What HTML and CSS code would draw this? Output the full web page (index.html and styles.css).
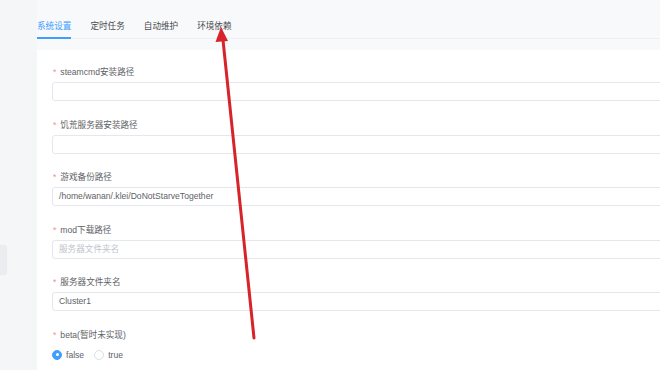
FILE: index.html
```html
<!DOCTYPE html>
<html lang="zh-CN">

<head>
    <meta charset="UTF-8">
    <meta name="viewport" content="width=device-width, initial-scale=1.0">
    <title>系统设置</title>

    <link rel="stylesheet" href="styles.css">
</head>

<body>

    <div class="layout">
        <div class="side">
            <div class="side-handle"></div>
        </div>

        <div class="main">
            <div class="tabs">
                <div class="tab active">系统设置</div>
                <div class="tab">定时任务</div>
                <div class="tab">自动维护</div>
                <div class="tab">环境依赖</div>
            </div>

            <div class="card">
                <div class="form">
                    <div class="form-item">
                        <label class="form-label">steamcmd安装路径</label>
                        <div class="input"></div>
                    </div>
                    <div class="form-item">
                        <label class="form-label">饥荒服务器安装路径</label>
                        <div class="input"></div>
                    </div>
                    <div class="form-item">
                        <label class="form-label">游戏备份路径</label>
                        <div class="input">/home/wanan/.klei/DoNotStarveTogether</div>
                    </div>
                    <div class="form-item">
                        <label class="form-label">mod下载路径</label>
                        <div class="input placeholder">服务器文件夹名</div>
                    </div>
                    <div class="form-item">
                        <label class="form-label">服务器文件夹名</label>
                        <div class="input">Cluster1</div>
                    </div>
                    <div class="form-item">
                        <label class="form-label">beta(暂时未实现)</label>
                        <div class="radio-group">
                            <span class="radio checked"></span><span class="radio-text">false</span>
                            <span class="radio"></span><span class="radio-text">true</span>
                        </div>
                    </div>
                </div>
            </div>
        </div>
    </div>

    <!-- annotation arrow drawn over the screenshot -->
    <svg class="arrow" width="660" height="370" viewBox="0 0 660 370">
        <line x1="254" y1="338" x2="223" y2="40" stroke="#d8232a" stroke-width="3" stroke-linecap="round" />
        <polygon points="221,27 215.5,42 228,41" fill="#d8232a" />
    </svg>

</body>

</html>
```

FILE: styles.css
```css
body {
    margin: 0;
    padding: 0;
    background: #f8f9fb;
    font-family: 'Liberation Sans', 'Noto Sans CJK SC', sans-serif;
    font-size: 8.6px;
    color: #606266;
    overflow: hidden;
}

.layout {
    display: flex;
    height: 370px;
}

/* left strip with the little collapse handle */
.side {
    width: 37px;
    flex-shrink: 0;
    background: #f5f6f8;
    padding-top: 245px;
    box-sizing: border-box;
}

.side-handle {
    width: 7px;
    height: 30px;
    background: #eaecef;
    border-radius: 0 2px 2px 0;
}

.main {
    flex: 1;
    min-width: 0;
    display: flex;
    flex-direction: column;
}

/* Tabs */
.tabs {
    display: flex;
    gap: 19px;
    height: 39px;
    border-bottom: 1px solid #eef0f3;
    box-sizing: border-box;
}

.tab {
    padding-top: 20px;
    line-height: 12px;
    height: 39px;
    box-sizing: border-box;
    border-bottom: 2px solid transparent;
    color: #4a4c50;
}

.tab.active {
    color: #409eff;
    border-bottom-color: #409eff;
}

/* Card */
.card {
    flex: 1;
    margin-top: 11px;
    background: #fff;
    overflow: hidden;
    padding: 16px 0 0 15px;
}

.form {
    width: 640px;
}

.form-item {
    margin-bottom: 17.5px;
}

.form-label {
    display: block;
    line-height: 12px;
    margin-bottom: 4px;
    color: #606266;
}

.form-label::before {
    content: "*";
    color: #f38b9a;
    margin: 0 4px 0 1px;
}

.input {
    height: 19px;
    line-height: 17px;
    border: 1px solid #e4e7ed;
    border-radius: 3px;
    padding-left: 6px;
    box-sizing: border-box;
    color: #606266;
}

.input.placeholder {
    color: #c0c4cc;
}

/* Radios */
.radio-group {
    display: flex;
    align-items: center;
    height: 20px;
    margin-top: 2px;
}

.radio {
    width: 10px;
    height: 10px;
    border: 1px solid #dcdfe6;
    border-radius: 50%;
    box-sizing: border-box;
    background: #fff;
    position: relative;
}

.radio.checked {
    border-color: #409eff;
    background: #409eff;
}

.radio.checked::after {
    content: "";
    position: absolute;
    left: 2.5px;
    top: 2.5px;
    width: 3px;
    height: 3px;
    border-radius: 50%;
    background: #fff;
}

.radio-text {
    margin: 0 10px 0 4px;
    color: #606266;
}

.arrow {
    position: absolute;
    top: 0;
    left: 0;
    pointer-events: none;
}
```
